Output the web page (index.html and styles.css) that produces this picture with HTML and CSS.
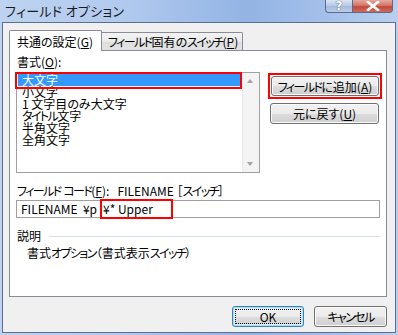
FILE: index.html
```html
<!DOCTYPE html>
<html lang="ja">
<head>
<meta charset="utf-8">
<title>フィールド オプション</title>
<link rel="stylesheet" href="styles.css">
</head>
<body>
<div class="window">
  <div class="titlebar">
    <span class="title">フィールド オプション</span>
    <div class="caption-btns">
      <span class="cap-help">?</span>
      <span class="cap-close">
        <svg width="14" height="10" viewBox="0 0 14 10"><path d="M2 1 L12 9 M12 1 L2 9" stroke="#fff" stroke-width="2.6" stroke-linecap="square"/></svg>
      </span>
    </div>
  </div>
  <div class="client">
    <div class="tabs">
      <div class="tab tab-active">共通の設定(<u>G</u>)</div>
      <div class="tab tab-other"><span class="k">フィールド</span>固有の<span class="k">スイッチ</span>(<u>P</u>)</div>
    </div>
    <div class="panel">
      <div class="top-row">
        <div class="left-col">
          <div class="label">書式(<u>O</u>):</div>
          <div class="listbox">
            <div class="items">
              <div class="item selected">大文字</div>
              <div class="item">小文字</div>
              <div class="item">1 文字目のみ大文字</div>
              <div class="item"><span class="k">タイトル</span>文字</div>
              <div class="item">半角文字</div>
              <div class="item">全角文字</div>
            </div>
            <div class="scrollbar">
              <span class="arrow-up"></span>
              <span class="arrow-down"></span>
            </div>
            <div class="mark-item"></div>
          </div>
        </div>
        <div class="right-col">
          <div class="mark-btn"><button class="btn btn-add"><span class="k">フィールド</span>に追加(<u>A</u>)</button></div>
          <button class="btn btn-undo">元に戻す(<u>U</u>)</button>
        </div>
      </div>
      <div class="code-label"><span class="k">フィールド</span> <span class="k">コード</span>(<u>F</u>):&nbsp;&nbsp; FILENAME ［<span class="k">スイッチ</span>］</div>
      <div class="textbox"><span class="tb-text">FILENAME&nbsp; ¥p</span><span class="mark-text">¥* Upper</span></div>
      <div class="section"><span>説明</span><span class="sep"></span></div>
      <div class="desc">書式<span class="k">オプション</span>（書式表示<span class="k">スイッチ</span>）</div>
    </div>
    <div class="footer">
      <button class="btn btn-ok"><span class="focus">OK</span></button>
      <button class="btn btn-cancel"><span class="k">キャンセル</span></button>
    </div>
  </div>
</div>
</body>
</html>
```

FILE: styles.css
```css
html, body {
  margin: 0;
  padding: 0;
}
body {
  width: 398px;
  height: 335px;
  overflow: hidden;
  font-family: "Noto Sans CJK JP", "Liberation Sans", sans-serif;
  font-size: 12px;
  color: #000;
  font-feature-settings: "palt";
}
.k {
  letter-spacing: -1.6px;
}
.window {
  width: 398px;
  height: 335px;
  box-sizing: border-box;
  display: flex;
  flex-direction: column;
  background: linear-gradient(to right, #bdd3f1 0%, #b2caef 30%, #93b4e4 62%, #a4c0ea 82%, #b9cff0 100%);
}
.titlebar {
  height: 22px;
  display: flex;
  justify-content: space-between;
  align-items: flex-start;
  flex: none;
}
.title {
  margin: 2px 0 0 5px;
  font-size: 13px;
  line-height: 17px;
  color: #1a1a1a;
  letter-spacing: 0.3px;
}
.caption-btns {
  display: flex;
  margin-right: 5px;
  height: 13px;
}
.cap-help, .cap-close {
  height: 13px;
  box-sizing: border-box;
  border: 1px solid #5b6a88;
  border-top: none;
  display: flex;
  align-items: center;
  justify-content: center;
}
.cap-help {
  width: 27px;
  border-right: none;
  border-radius: 0 0 0 4px;
  background: linear-gradient(#dbe5f5, #b6c8e6 50%, #a5badf 51%, #bccce8);
  color: #fff;
  font: bold 12px/12px "DejaVu Sans", sans-serif;
  text-shadow: 0 0 1px #4a5a7a, 0 0 1px #4a5a7a;
}
.cap-close {
  width: 41px;
  border-radius: 0 0 4px 0;
  background: linear-gradient(#e5a89d, #d4776a 45%, #c24a3b 55%, #d06b5c);
}
.client {
  flex: 1;
  margin: 0 2px 2px 2px;
  border: 1px solid #5d6e92;
  background: #f0f0f0;
  display: flex;
  flex-direction: column;
}
.tabs {
  display: flex;
  align-items: flex-end;
  padding: 7px 0 0 6px;
  position: relative;
  z-index: 2;
}
.tab {
  box-sizing: border-box;
  border: 1px solid #898c95;
  border-bottom: none;
  white-space: nowrap;
}
.tab-active {
  width: 93px;
  height: 21px;
  margin-bottom: -1px;
  background: #fff;
  padding: 3px 0 0 7px;
  line-height: 15px;
  border-radius: 2px 2px 0 0;
}
.tab-other {
  width: 141px;
  height: 18px;
  border-left: none;
  background: linear-gradient(#f3f3f3, #ebebeb 50%, #dedede 51%, #e3e3e3);
  padding: 1px 0 0 6px;
  line-height: 15px;
  border-radius: 0 2px 0 0;
}
.panel {
  box-sizing: border-box;
  height: 247px;
  margin: 0 8px 0 6px;
  border: 1px solid #898c95;
  background: #fff;
  padding: 0 0 0 6px;
  display: flex;
  flex-direction: column;
}
.top-row {
  display: flex;
  gap: 8px;
}
.left-col {
  width: 244px;
  display: flex;
  flex-direction: column;
}
.label {
  padding: 4px 0 0 1px;
  line-height: 14px;
  margin-bottom: 3px;
}
.listbox {
  position: relative;
  box-sizing: border-box;
  height: 101px;
  border: 1px solid #a0a0a0;
  display: flex;
}
.items {
  flex: 1;
  padding: 1px;
}
.item {
  height: 12px;
  line-height: 12px;
  padding-left: 4px;
  white-space: nowrap;
}
.item.selected {
  background: #3399ff;
  color: #fff;
}
.scrollbar {
  width: 17px;
  position: relative;
  background: linear-gradient(to right, #e6e8ee 0, #f3f3f3 2px, #f4f4f4);
}
.arrow-up, .arrow-down {
  position: absolute;
  left: 5px;
  width: 0;
  height: 0;
  border-left: 3.5px solid transparent;
  border-right: 3.5px solid transparent;
}
.arrow-up {
  top: 6px;
  border-bottom: 4px solid #a3a3a3;
}
.arrow-down {
  bottom: 6px;
  border-top: 4px solid #a3a3a3;
}
.mark-item {
  position: absolute;
  left: -2px;
  top: -1px;
  width: 227px;
  height: 17px;
  box-sizing: border-box;
  border: 2px solid #f00;
}
.right-col {
  display: flex;
  flex-direction: column;
  padding-top: 22px;
}
.mark-btn {
  border: 2px solid #f00;
  padding: 1px;
  width: 108px;
}
.btn {
  font: inherit;
  font-feature-settings: "palt";
  box-sizing: border-box;
  height: 21px;
  padding: 0;
  color: #000;
  border: 1px solid #707070;
  border-radius: 3px;
  background: linear-gradient(#f2f2f2 0%, #ebebeb 50%, #dddddd 51%, #cfcfcf 100%);
  box-shadow: inset 0 0 0 1px #fafafa;
  line-height: 17px;
  display: flex;
  align-items: center;
  justify-content: center;
}
.btn-add {
  width: 108px;
  height: 20px;
}
.btn-undo {
  width: 109px;
  margin: 4px 0 0 2px;
}
.code-label {
  margin-top: 11px;
  padding-left: 1px;
  line-height: 14px;
  white-space: nowrap;
}
.textbox {
  margin-top: 2px;
  width: 364px;
  height: 18px;
  box-sizing: border-box;
  border: 1px solid #a0a0a0;
  display: flex;
  align-items: center;
  white-space: nowrap;
}
.tb-text {
  padding-left: 4px;
  line-height: 14px;
}
.mark-text {
  margin-left: 3px;
  box-sizing: border-box;
  height: 20px;
  width: 73px;
  border: 2px solid #f00;
  padding-left: 1px;
  line-height: 16px;
}
.section {
  margin-top: 11px;
  display: flex;
  align-items: center;
  gap: 8px;
  line-height: 14px;
  padding-left: 1px;
  width: 363px;
}
.sep {
  flex: 1;
  height: 1px;
  background: #d5dfe5;
  margin-top: 1px;
}
.desc {
  margin-top: 3px;
  padding-left: 11px;
  line-height: 14px;
}
.footer {
  display: flex;
  justify-content: flex-end;
  gap: 10px;
  margin: 9px 8px 0 0;
}
.btn-ok {
  width: 72px;
  border-color: #3c7fb1;
  box-shadow: inset 0 0 0 1px #a7e1fa, inset 0 0 0 2px #d4f0fc;
}
.btn-ok .focus {
  box-sizing: border-box;
  width: 66px;
  height: 15px;
  border: 1px dotted #000;
  display: flex;
  align-items: center;
  justify-content: center;
}
.btn-cancel {
  width: 73px;
}
```
